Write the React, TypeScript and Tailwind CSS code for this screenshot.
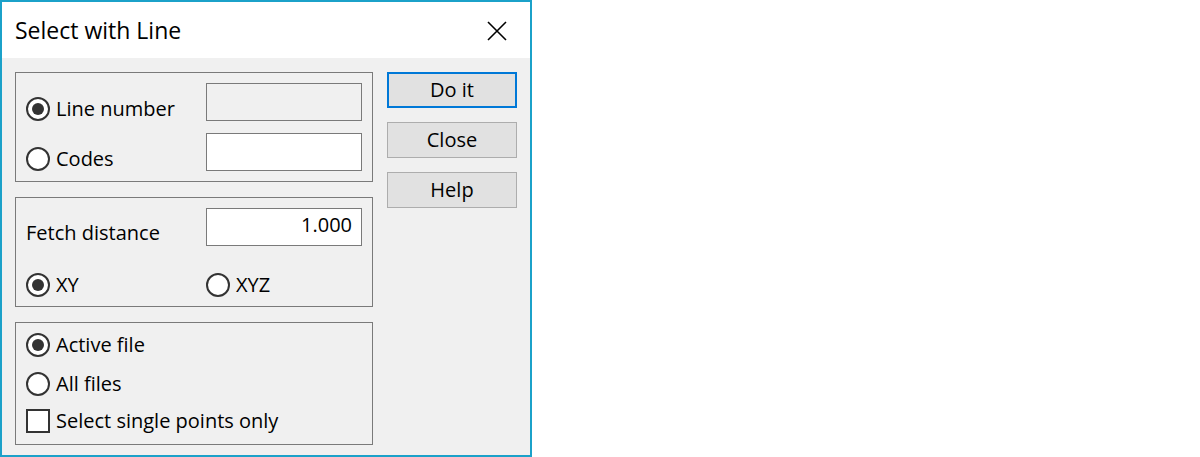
import React from 'react';

const FONT = "font-['Open_Sans','Noto_Sans',sans-serif]";

function Radio({ checked, label }: { checked?: boolean; label: string }) {
  return (
    <div className="flex items-center h-[24px]">
      <div className="w-[24px] h-[24px] rounded-full border-2 border-[#333333] bg-white grid place-items-center shrink-0">
        {checked && <div className="w-[12px] h-[12px] rounded-full bg-[#333333]" />}
      </div>
      <span className="ml-[6px] text-[20px] leading-none text-black">{label}</span>
    </div>
  );
}

function Check({ label }: { label: string }) {
  return (
    <div className="flex items-center h-[24px]">
      <div className="w-[24px] h-[24px] border-2 border-[#333333] bg-white shrink-0" />
      <span className="ml-[6px] text-[20px] leading-none text-black">{label}</span>
    </div>
  );
}

function Field({ value, disabled }: { value?: string; disabled?: boolean }) {
  return (
    <div
      className={`w-[156px] h-[38px] border border-[#7a7a7a] flex items-center justify-end pr-[9px] pb-[4px] text-[20px] leading-none text-black ${
        disabled ? 'bg-[#f0f0f0]' : 'bg-white'
      }`}
    >
      {value}
    </div>
  );
}

function Btn({ label, focused }: { label: string; focused?: boolean }) {
  return (
    <button
      className={`w-[130px] h-[36px] bg-[#e1e1e1] text-[20px] leading-none text-black ${
        focused ? 'border-2 border-[#0078d7]' : 'border border-[#adadad]'
      }`}
    >
      {label}
    </button>
  );
}

export default function App() {
  return (
    <div className={`w-[1200px] h-[457px] bg-white ${FONT}`}>
      <div className="w-[532px] h-[457px] border-2 border-[#1ba1c9] bg-[#f0f0f0] flex flex-col">
        {/* title bar */}
        <div className="h-[56px] bg-white flex items-center justify-between pl-[13px] pr-[23px]">
          <span className="text-[23px] leading-none text-black">Select with Line</span>
          <svg width="20" height="20" viewBox="0 0 20 20" className="mt-[1px]">
            <path d="M1 1 L19 19 M19 1 L1 19" stroke="#000" strokeWidth="1.6" />
          </svg>
        </div>

        {/* body */}
        <div className="flex pl-[13px] pt-[14px] gap-[14px]">
          <div className="flex flex-col gap-[15px] w-[358px]">
            <div className="h-[110px] border border-[#7a7a7a] pl-[10px] pr-[10px] pt-[10px] flex flex-col gap-[12px]">
              <div className="flex justify-between items-end">
                <Radio checked label="Line number" />
                <Field disabled />
              </div>
              <div className="flex justify-between items-end">
                <Radio label="Codes" />
                <Field />
              </div>
            </div>

            <div className="h-[110px] border border-[#7a7a7a] pl-[10px] pr-[10px] pt-[10px] flex flex-col">
              <div className="flex justify-between items-center h-[38px]">
                <span className="text-[20px] leading-none text-black mt-[11px]">Fetch distance</span>
                <Field value="1.000" />
              </div>
              <div className="flex mt-[27px]">
                <div className="w-[180px]">
                  <Radio checked label="XY" />
                </div>
                <Radio label="XYZ" />
              </div>
            </div>

            <div className="h-[123px] border border-[#7a7a7a] pl-[10px] pt-[10px] flex flex-col">
              <Radio checked label="Active file" />
              <div className="mt-[15px]">
                <Radio label="All files" />
              </div>
              <div className="mt-[13px]">
                <Check label="Select single points only" />
              </div>
            </div>
          </div>

          <div className="flex flex-col gap-[14px]">
            <Btn focused label="Do it" />
            <Btn label="Close" />
            <Btn label="Help" />
          </div>
        </div>
      </div>
    </div>
  );
}
